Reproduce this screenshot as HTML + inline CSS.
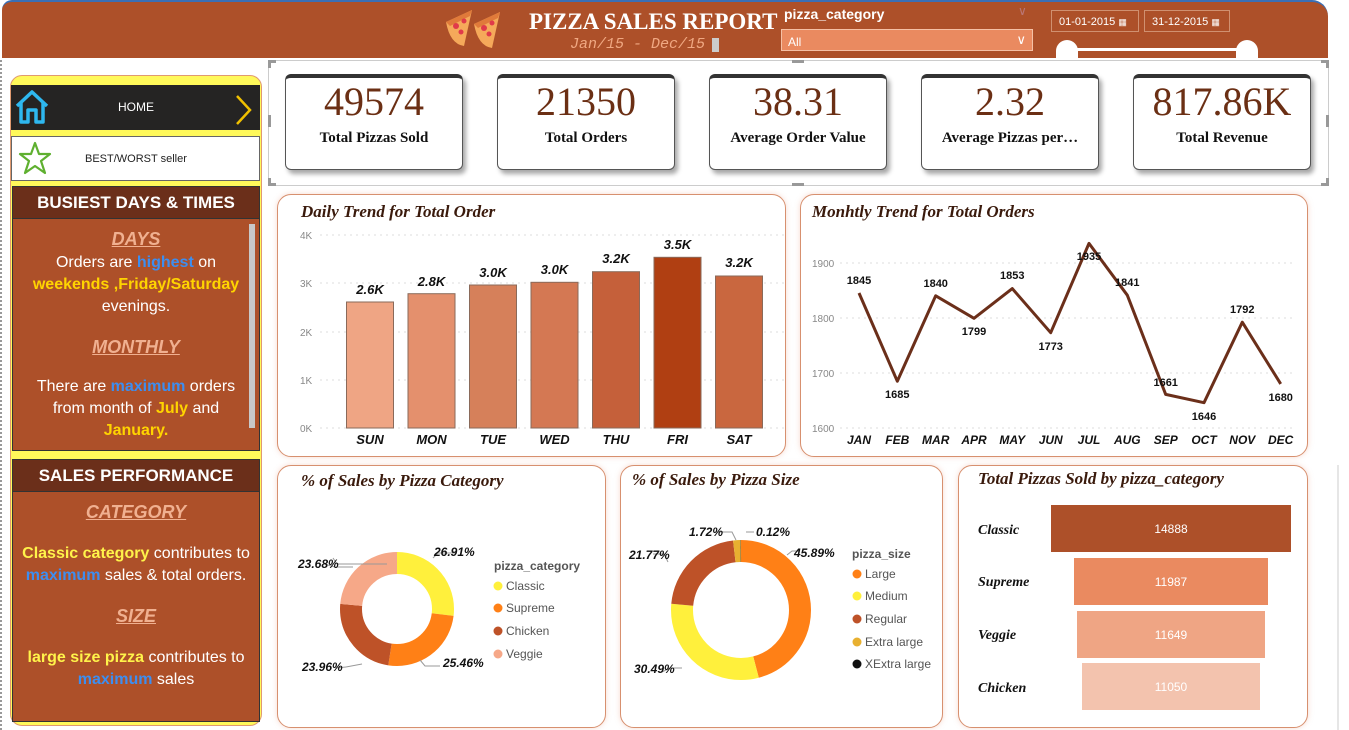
<!DOCTYPE html>
<html><head><meta charset="utf-8"><style>
*{margin:0;padding:0;box-sizing:border-box}
body{width:1349px;height:730px;overflow:hidden;background:#fff;position:relative;font-family:"Liberation Sans",sans-serif}
.abs{position:absolute}
.hdr{left:2px;top:0;width:1326px;height:58px;background:#AD5029;border-top:2px solid #3a6fb5;border-radius:10px 16px 0 0}
.card{position:absolute;top:74px;width:178px;height:96px;background:#fff;border:1px solid #555;border-top:4px solid #333;border-radius:6px;box-shadow:3px 4px 5px rgba(0,0,0,.35);text-align:center;font-family:"Liberation Serif",serif}
.card .v{font-size:40px;color:#6B2F14;line-height:44px;margin-top:2px}
.card .l{font-size:15px;font-weight:bold;color:#111;margin-top:6px}
.pan{position:absolute;background:#fff;border:1px solid #d7906f;border-radius:14px;box-shadow:0 0 6px rgba(230,150,120,.35)}
.tt{position:absolute;font-family:"Liberation Serif",serif;font-style:italic;font-weight:bold;font-size:17px;color:#3a1a0c}
.lp{left:10px;top:75px;width:252px;height:651px;background:#FFF95A;border:1px solid #e09a70;border-radius:12px}
.sec{position:absolute;left:12px;width:248px;background:#AD5029;border:1px solid #333;color:#fff;text-align:center;font-size:16px;line-height:22px}
.sh{background:#6B2F1A;color:#fff;font-weight:bold;font-size:17px;height:32px;line-height:32px;border-bottom:1px solid #333}
.u{color:#F0B090;font-weight:bold;font-style:italic;text-decoration:underline;font-size:18px}
.b{color:#3d8ef0;font-weight:bold}.y{color:#FFD400;font-weight:bold}.yy{color:#FFF34A;font-weight:bold}
</style></head><body>
<div class="abs" style="left:0;top:60px;width:3px;height:670px;border-left:2px dotted #999"></div>
<div class="abs hdr"></div>
<svg class="abs" style="left:442px;top:4px" width="75" height="46" viewBox="0 0 75 46">
<g><path d="M4 18 L30 6 L22 42 Q8 40 4 18Z" fill="#F5A95A"/><path d="M4 18 L30 6 L28 12 L8 22Z" fill="#E07A3A"/><circle cx="14" cy="22" r="3" fill="#E03A4A"/><circle cx="22" cy="17" r="2.5" fill="#E03A4A"/><circle cx="19" cy="28" r="2.5" fill="#E03A4A"/></g>
<g transform="translate(28,2)"><path d="M4 18 L30 6 L22 42 Q8 40 4 18Z" fill="#F5A95A"/><path d="M4 18 L30 6 L28 12 L8 22Z" fill="#E07A3A"/><circle cx="14" cy="22" r="3" fill="#E03A4A"/><circle cx="22" cy="17" r="2.5" fill="#E03A4A"/><circle cx="19" cy="28" r="2.5" fill="#E03A4A"/></g></svg>
<div class="abs" style="left:529px;top:9px;font-family:'Liberation Serif',serif;font-weight:bold;font-size:23px;color:#fff;white-space:nowrap">PIZZA SALES REPORT</div>
<div class="abs" style="left:570px;top:36px;font-family:'Liberation Mono',monospace;font-style:italic;font-size:15px;color:#F0A882;white-space:nowrap">Jan/15 - Dec/15</div>
<div class="abs" style="left:712px;top:38px;width:7px;height:14px;background:#ccc"></div>
<div class="abs" style="left:784px;top:6px;color:#fff;font-weight:bold;font-size:14px">pizza_category</div>
<div class="abs" style="left:1018px;top:4px;color:#b77;font-size:12px">&#8744;</div>
<div class="abs" style="left:781px;top:29px;width:252px;height:22px;background:#EA8A60;border:1px solid #f5c0a5;color:#fff;font-size:12px;padding:5px 6px">All<span style="position:absolute;right:6px;top:2px;font-size:13px">&#8744;</span></div>
<div class="abs" style="left:1051px;top:10px;width:88px;height:22px;border:1px solid #d09070;color:#fff;font-size:11px;padding:5px 7px">01-01-2015 <span style="font-size:9px">&#9638;</span></div>
<div class="abs" style="left:1144px;top:10px;width:86px;height:22px;border:1px solid #d09070;color:#fff;font-size:11px;padding:5px 7px">31-12-2015 <span style="font-size:9px">&#9638;</span></div>
<div class="abs" style="left:1066px;top:48px;width:182px;height:3px;background:#fff"></div>
<div class="abs" style="left:1056px;top:40px;width:22px;height:20px;border-radius:11px 11px 0 0;background:#fff"></div>
<div class="abs" style="left:1236px;top:40px;width:22px;height:20px;border-radius:11px 11px 0 0;background:#fff"></div>

<div class="abs" style="left:268px;top:60px;width:1061px;height:126px;border:1px solid #ccc"></div>
<div class="card" style="left:285px"><div class="v">49574</div><div class="l">Total Pizzas Sold</div></div>
<div class="card" style="left:497px"><div class="v">21350</div><div class="l">Total Orders</div></div>
<div class="card" style="left:709px"><div class="v">38.31</div><div class="l">Average Order Value</div></div>
<div class="card" style="left:921px"><div class="v">2.32</div><div class="l">Average Pizzas per…</div></div>
<div class="card" style="left:1133px"><div class="v">817.86K</div><div class="l">Total Revenue</div></div>

<div class="abs lp"></div>
<div class="abs" style="left:11px;top:85px;width:249px;height:45px;background:#252423"></div>
<svg class="abs" style="left:13px;top:88px" width="40" height="38" viewBox="0 0 40 38"><path d="M4 18 L19 4 L34 18 M8 15 V34 H15 V22 H23 V34 H30 V15" fill="none" stroke="#2EB8F0" stroke-width="3.5" stroke-linejoin="round"/></svg>
<div class="abs" style="left:118px;top:100px;color:#fff;font-size:12px">HOME</div>
<svg class="abs" style="left:234px;top:94px" width="20" height="32"><path d="M3 2 L16 16 L3 30" fill="none" stroke="#F0C000" stroke-width="2.5"/></svg>
<div class="abs" style="left:11px;top:136px;width:249px;height:45px;background:#fff;border:1px solid #666"></div>
<svg class="abs" style="left:18px;top:141px" width="34" height="36" viewBox="0 0 34 36"><path d="M17 2 L21 13 L32 13 L23 20 L27 32 L17 25 L7 32 L11 20 L2 13 L13 13Z" fill="none" stroke="#5FB030" stroke-width="2.2" stroke-linejoin="round"/></svg>
<div class="abs" style="left:85px;top:153px;color:#222;font-size:11px">BEST/WORST seller</div>

<div class="sec" style="top:186px;height:265px"><div class="sh">BUSIEST DAYS &amp; TIMES</div>
<div style="padding-top:9px"><span class="u">DAYS</span><br>Orders are <span class="b">highest</span> on<br><span class="y">weekends ,Friday/Saturday</span><br>evenings.<br><div style="height:18px"></div><span class="u">MONTHLY</span><div style="height:16px"></div>There are <span class="b">maximum</span> orders<br>from month of <span class="y">July</span> and<br><span class="y">January.</span></div>
<div class="abs" style="right:4px;top:37px;width:6px;height:204px;background:#c8c8c8"></div></div>
<div class="sec" style="top:459px;height:263px"><div class="sh">SALES PERFORMANCE</div>
<div style="padding-top:9px"><span class="u">CATEGORY</span><div style="height:18px"></div><span class="yy">Classic category</span> contributes to<br><span class="b">maximum</span> sales &amp; total orders.<div style="height:18px"></div><span class="u">SIZE</span><div style="height:18px"></div><span class="yy">large size pizza</span> contributes to<br><span class="b">maximum</span> sales</div></div>

<div class="pan" style="left:277px;top:194px;width:509px;height:263px"></div>
<div class="pan" style="left:800px;top:194px;width:508px;height:263px"></div>
<div class="pan" style="left:277px;top:465px;width:329px;height:263px"></div>
<div class="pan" style="left:620px;top:465px;width:323px;height:263px"></div>
<div class="pan" style="left:958px;top:465px;width:350px;height:263px"></div>
<div class="tt" style="left:301px;top:202px">Daily Trend for Total Order</div>
<div class="tt" style="left:812px;top:202px">Monhtly Trend for Total Orders</div>
<div class="tt" style="left:301px;top:471px">% of Sales by Pizza Category</div>
<div class="tt" style="left:632px;top:470px">% of Sales by Pizza Size</div>
<div class="tt" style="left:978px;top:469px">Total Pizzas Sold by pizza_category</div>

<svg class="abs" style="left:0;top:0" width="1349" height="730" font-family="Liberation Sans, sans-serif">
<g stroke="#ddd" stroke-dasharray="2 4"><line x1="320" y1="235" x2="785" y2="235"/><line x1="320" y1="283" x2="785" y2="283"/><line x1="320" y1="332" x2="785" y2="332"/><line x1="320" y1="380" x2="785" y2="380"/><line x1="320" y1="428" x2="785" y2="428"/>
<line x1="840" y1="263" x2="1292" y2="263"/><line x1="840" y1="318" x2="1292" y2="318"/><line x1="840" y1="373" x2="1292" y2="373"/><line x1="840" y1="428" x2="1292" y2="428"/></g>
<g font-size="10" fill="#888"><text x="300" y="239">4K</text><text x="300" y="287">3K</text><text x="300" y="336">2K</text><text x="300" y="384">1K</text><text x="300" y="432">0K</text>
<text x="812" y="267">1900</text><text x="812" y="322">1800</text><text x="812" y="377">1700</text><text x="812" y="432">1600</text></g>
<g stroke="#8a6a5a" stroke-width="1">
<rect x="346.5" y="302" width="47" height="126" fill="#EFA584"/><rect x="408" y="293.7" width="47" height="134.3" fill="#E4906D"/><rect x="469.5" y="285" width="47" height="143" fill="#D6805A"/><rect x="531" y="282.3" width="47" height="145.7" fill="#D47853"/><rect x="592.5" y="271.7" width="47" height="156.3" fill="#C5603A"/><rect x="654" y="257.3" width="47" height="170.7" fill="#B03F12"/><rect x="715.5" y="276" width="47" height="152" fill="#C9673F"/></g>
<g font-size="13" font-weight="bold" font-style="italic" fill="#111" text-anchor="middle">
<text x="370" y="294">2.6K</text><text x="431.5" y="286">2.8K</text><text x="493" y="277">3.0K</text><text x="554.5" y="274">3.0K</text><text x="616" y="263">3.2K</text><text x="677.5" y="249">3.5K</text><text x="739" y="267">3.2K</text>
<text x="370" y="444">SUN</text><text x="431.5" y="444">MON</text><text x="493" y="444">TUE</text><text x="554.5" y="444">WED</text><text x="616" y="444">THU</text><text x="677.5" y="444">FRI</text><text x="739" y="444">SAT</text>
<g font-size="12"><text x="859" y="444">JAN</text><text x="897.3" y="444">FEB</text><text x="935.7" y="444">MAR</text><text x="974" y="444">APR</text><text x="1012.3" y="444">MAY</text><text x="1050.7" y="444">JUN</text><text x="1089" y="444">JUL</text><text x="1127.3" y="444">AUG</text><text x="1165.7" y="444">SEP</text><text x="1204" y="444">OCT</text><text x="1242.3" y="444">NOV</text><text x="1280.7" y="444">DEC</text></g></g>
<polyline points="859,293 897.3,381.2 935.7,295.8 974,318.3 1012.3,288.6 1050.7,332.7 1089,243.4 1127.3,295.2 1165.7,394.4 1204,402.7 1242.3,322.2 1280.7,383.9" fill="none" stroke="#6B2F1A" stroke-width="3" stroke-linejoin="round"/>
<g font-size="11" font-weight="bold" fill="#111" text-anchor="middle">
<text x="859" y="284">1845</text><text x="897.3" y="398">1685</text><text x="935.7" y="287">1840</text><text x="974" y="335">1799</text><text x="1012.3" y="279">1853</text><text x="1050.7" y="350">1773</text><text x="1089" y="260">1935</text><text x="1127.3" y="286">1841</text><text x="1165.7" y="386">1661</text><text x="1204" y="420">1646</text><text x="1242.3" y="313">1792</text><text x="1280.7" y="401">1680</text></g>

<g fill="none" stroke-width="22" transform="rotate(-90 397 609)">
<circle cx="397" cy="609" r="46" stroke="#FFF03C" stroke-dasharray="77.78 300" stroke-dashoffset="0"/>
<circle cx="397" cy="609" r="46" stroke="#FF8016" stroke-dasharray="73.59 300" stroke-dashoffset="-77.78"/>
<circle cx="397" cy="609" r="46" stroke="#BE5228" stroke-dasharray="69.25 300" stroke-dashoffset="-151.37"/>
<circle cx="397" cy="609" r="46" stroke="#F6A888" stroke-dasharray="68.44 300" stroke-dashoffset="-220.62"/></g>
<g fill="none" stroke-width="22" transform="rotate(-90 741 610)">
<circle cx="741" cy="610" r="59" stroke="#FF8016" stroke-dasharray="170.12 400" stroke-dashoffset="0"/>
<circle cx="741" cy="610" r="59" stroke="#FFF03C" stroke-dasharray="113.03 400" stroke-dashoffset="-170.12"/>
<circle cx="741" cy="610" r="59" stroke="#BE5228" stroke-dasharray="80.70 400" stroke-dashoffset="-283.15"/>
<circle cx="741" cy="610" r="59" stroke="#E8B030" stroke-dasharray="6.38 400" stroke-dashoffset="-363.85"/>
<circle cx="741" cy="610" r="59" stroke="#333" stroke-dasharray="0.6 400" stroke-dashoffset="-370.2"/></g>
<g stroke="#999" fill="none"><path d="M387 564 L337 564 L333 558"/><path d="M457 553 L438 553 L433 558"/><path d="M353 567 L337 567"/><path d="M335 567 L324 564"/><path d="M420 660 L425 666 L440 666"/><path d="M346 667 L336 668"/><path d="M362 664 L346 667"/>
<path d="M787 555 L792 551 L800 551"/><path d="M718 532 L732 532 L736 540"/><path d="M746 532 L754 532"/><path d="M653 554 L664 554 L668 562"/><path d="M682 668 L670 668 L662 672"/></g>
<g font-size="12" font-weight="bold" font-style="italic" fill="#111">
<text x="434" y="556">26.91%</text><text x="443" y="667">25.46%</text><text x="302" y="671">23.96%</text><text x="298" y="568">23.68%</text>
<text x="794" y="557">45.89%</text><text x="634" y="673">30.49%</text><text x="629" y="559">21.77%</text><text x="689" y="536">1.72%</text><text x="756" y="536">0.12%</text></g>
<g font-size="12" fill="#555"><text x="494" y="570" font-weight="bold">pizza_category</text>
<circle cx="498" cy="586" r="4.5" fill="#FFF03C"/><text x="506" y="590">Classic</text>
<circle cx="498" cy="608" r="4.5" fill="#FF8016"/><text x="506" y="612">Supreme</text>
<circle cx="498" cy="631" r="4.5" fill="#BE5228"/><text x="506" y="635">Chicken</text>
<circle cx="498" cy="654" r="4.5" fill="#F6A888"/><text x="506" y="658">Veggie</text>
<text x="852" y="558" font-weight="bold">pizza_size</text>
<circle cx="857" cy="574" r="4.5" fill="#FF8016"/><text x="865" y="578">Large</text>
<circle cx="857" cy="596" r="4.5" fill="#FFF03C"/><text x="865" y="600">Medium</text>
<circle cx="857" cy="619" r="4.5" fill="#BE5228"/><text x="865" y="623">Regular</text>
<circle cx="857" cy="642" r="4.5" fill="#E8B030"/><text x="865" y="646">Extra large</text>
<circle cx="857" cy="664" r="4.5" fill="#111"/><text x="865" y="668">XExtra large</text></g>

<rect x="1051" y="505" width="240" height="47" fill="#AD5029"/>
<rect x="1074" y="558" width="194" height="47" fill="#EA8A60"/>
<rect x="1077" y="611" width="188" height="47" fill="#EFA584"/>
<rect x="1082" y="663" width="178" height="47" fill="#F3C3AE"/>
<g font-size="12" fill="#fff" text-anchor="middle"><text x="1171" y="533">14888</text><text x="1171" y="586">11987</text><text x="1171" y="639">11649</text><text x="1171" y="691">11050</text></g>
<g font-family="Liberation Serif, serif" font-size="14" font-weight="bold" font-style="italic" fill="#111"><text x="978" y="534">Classic</text><text x="978" y="586">Supreme</text><text x="978" y="639">Veggie</text><text x="978" y="692">Chicken</text></g>
<g fill="#999"><rect x="268" y="60" width="8" height="3"/><rect x="268" y="60" width="3" height="8"/><rect x="1321" y="60" width="8" height="3"/><rect x="1326" y="60" width="3" height="8"/><rect x="268" y="183" width="8" height="3"/><rect x="268" y="178" width="3" height="8"/><rect x="1321" y="183" width="8" height="3"/><rect x="1326" y="178" width="3" height="8"/><rect x="268" y="115" width="3" height="12"/><rect x="1326" y="115" width="3" height="12"/><rect x="792" y="60" width="12" height="3"/><rect x="792" y="183" width="12" height="3"/></g>
<line x1="1338" y1="465" x2="1338" y2="730" stroke="#ccc"/>
</svg>
</body></html>
